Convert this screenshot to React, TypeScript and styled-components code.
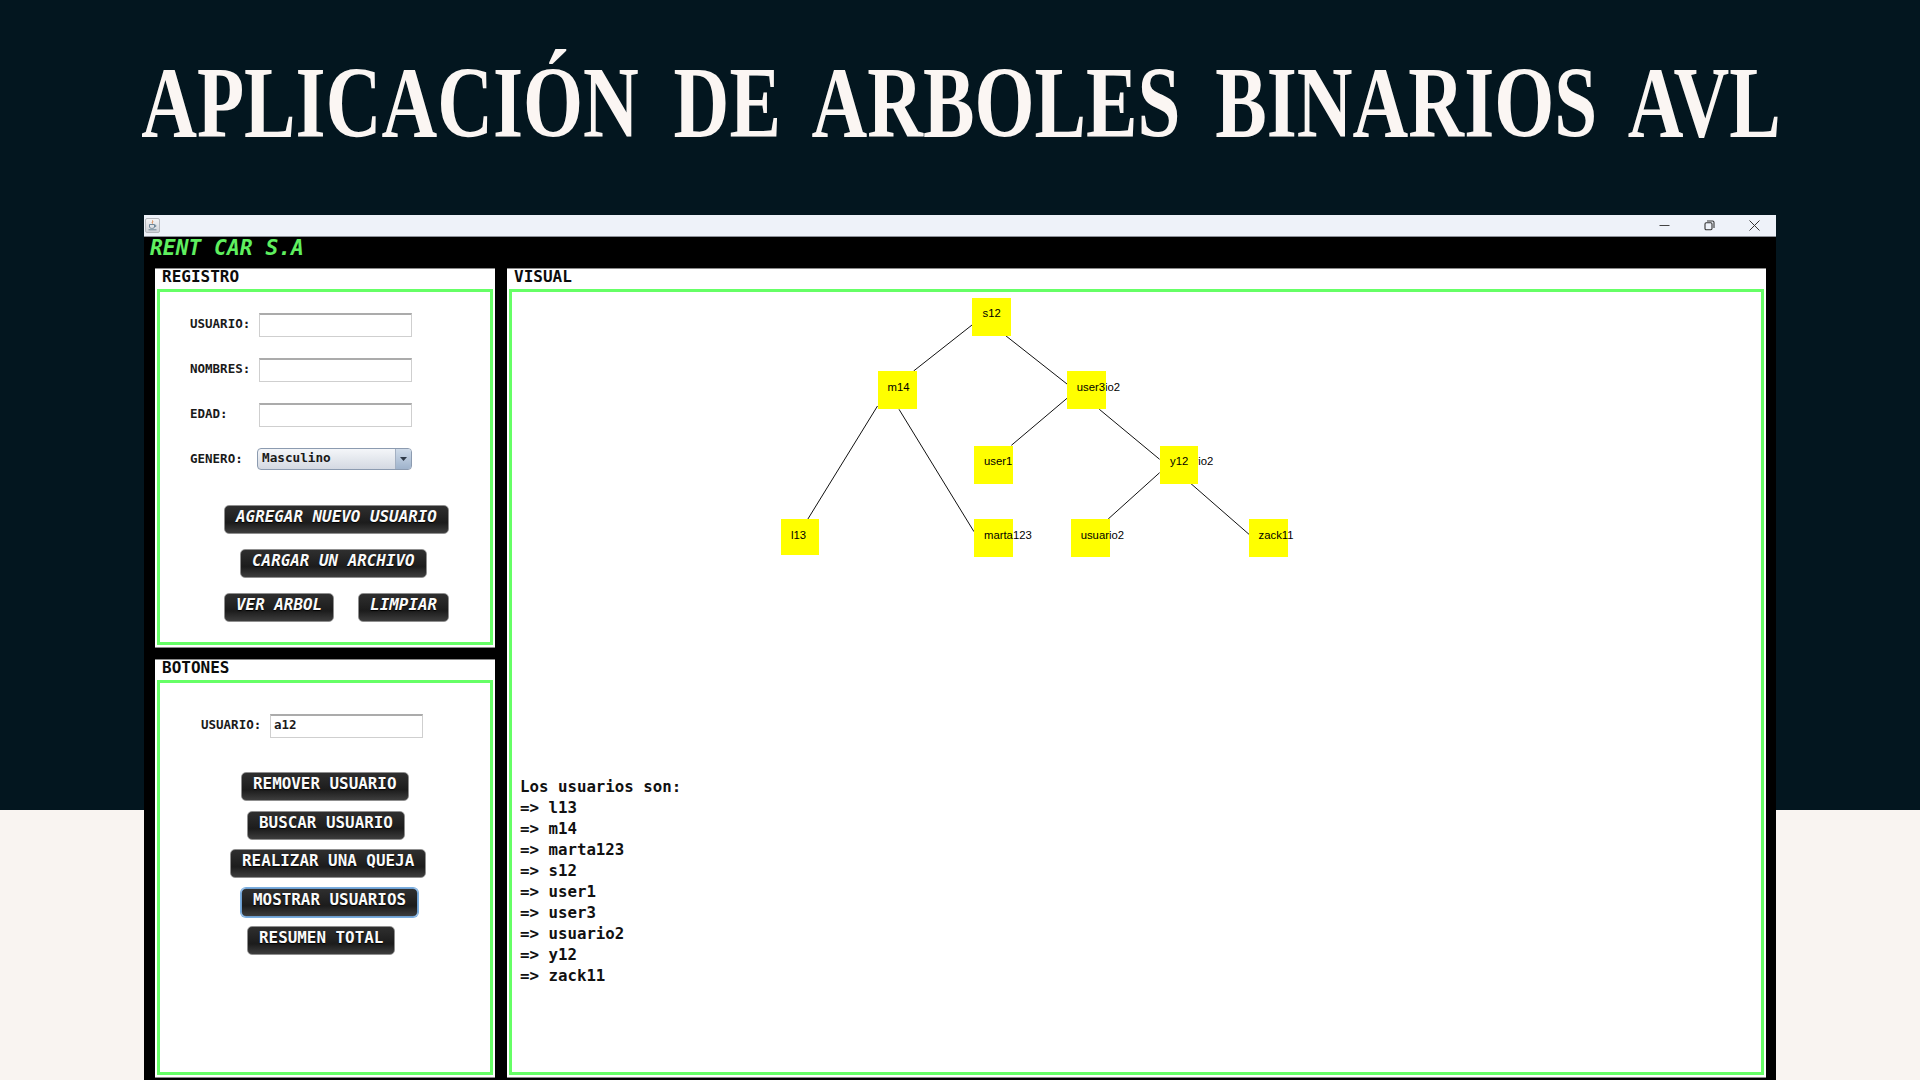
import React from "react";
import styled, { createGlobalStyle } from "styled-components";

const Global = createGlobalStyle`
  html, body { margin: 0; padding: 0; }
  body { background: #03161f; }
`;

const MONO = `"DejaVu Sans Mono", "Liberation Mono", monospace`;

const Page = styled.div`
  width: 1920px;
  height: 1080px;
  overflow: hidden;
  background: linear-gradient(#03161f 810px, #f9f4f1 810px);
  display: flex;
  flex-direction: column;
`;
const Hero = styled.header`
  height: 215px;
  flex: none;
  display: flex;
  justify-content: center;
  padding: 52px 0 0 2px;
  box-sizing: border-box;
`;
const Title = styled.h1`
  margin: 0;
  font-family: "Liberation Serif", serif;
  font-weight: 700;
  font-size: 102px;
  line-height: 102px;
  color: #fbf6f3;
  white-space: nowrap;
  word-spacing: 20.5px;
  transform: scaleX(0.757);
  transform-origin: center top;
`;
const Win = styled.section`
  flex: none;
  width: 1632px;
  height: 865px;
  margin-left: 144px;
  background: #000;
  display: flex;
  flex-direction: column;
`;
const TitleBar = styled.div`
  height: 21px;
  flex: none;
  background: #eef2f9;
  border-bottom: 1px solid #8d9199;
  display: flex;
  align-items: center;
  justify-content: space-between;
  padding: 0 16px 0 1px;
`;
const AppIcon = styled.div`
  width: 15px;
  height: 15px;
  box-sizing: border-box;
  border: 1px solid #b5b8bd;
  border-radius: 2px;
  background: linear-gradient(#f3f4f6, #cfd2d8);
  display: flex;
  align-items: center;
  justify-content: center;
`;
const Controls = styled.div`
  display: flex;
  align-items: center;
  gap: 34px;
`;
const Brand = styled.div`
  height: 31px;
  flex: none;
  padding-left: 6px;
  font: italic 700 21.3px/21px ${MONO};
  color: #5fef5f;
`;
const Columns = styled.div`
  display: flex;
  gap: 12px;
  padding: 0 10px 0 11px;
  flex: 1;
  min-height: 0;
`;
const LeftColumn = styled.div`
  width: 340px;
  flex: none;
  display: flex;
  flex-direction: column;
  gap: 11px;
  padding-bottom: 2px;
`;
const Panel = styled.div<{ $h?: number }>`
  background: #fff;
  box-sizing: border-box;
  border-top: 1px solid #8a8a8a;
  border-bottom: 1px solid #8a8a8a;
  padding: 0 2px 2px;
  display: flex;
  flex-direction: column;
  ${(p) => (p.$h ? `height: ${p.$h}px; flex: none;` : "flex: 1;")}
`;
const RightPanel = styled(Panel)`
  flex: 1;
  margin-bottom: 2px;
`;
const PanelTitle = styled.div`
  height: 20px;
  flex: none;
  padding-left: 5px;
  font: 700 16px/15px ${MONO};
  color: #0c0c0c;
`;
const Frame = styled.div<{ $top?: number }>`
  flex: 1;
  min-height: 0;
  border: 3px solid #66ff66;
  padding-top: ${(p) => p.$top ?? 0}px;
  display: flex;
  flex-direction: column;
  align-items: flex-start;
`;
const FormRow = styled.div<{ $indent: number }>`
  display: flex;
  align-items: center;
  height: 24px;
  margin-left: ${(p) => p.$indent}px;
  margin-bottom: 21px;
`;
const FieldLabel = styled.label`
  width: 69px;
  flex: none;
  font: 700 12.5px/16px ${MONO};
  color: #1a1a1a;
  padding-bottom: 3px;
`;
const TextField = styled.input`
  width: 153px;
  height: 24px;
  box-sizing: border-box;
  border: 1px solid #cfcfcf;
  border-top: 2px solid #ababab;
  background: #fff;
  padding: 0 3px 5px;
  font: 700 12.5px ${MONO};
  color: #1a1a1a;
  outline: none;
`;
const Combo = styled.div`
  width: 155px;
  height: 22px;
  margin-left: -2px;
  margin-top: -2px;
  box-sizing: border-box;
  border: 1px solid #8c9bb0;
  border-radius: 4px;
  background: linear-gradient(#f4f6f9, #d4d9e2);
  display: flex;
  align-items: stretch;
  justify-content: space-between;
  overflow: hidden;
  font: 700 12.7px/17px ${MONO};
  color: #1a1a1a;
  padding-left: 4px;
`;
const ComboArrow = styled.div`
  width: 15px;
  flex: none;
  background: linear-gradient(#cfdbe9, #9fb3cc);
  border-left: 1px solid #a3b0c2;
  display: flex;
  align-items: center;
  justify-content: center;
`;
const ButtonStack = styled.div<{ $gap: number; $top: number }>`
  display: flex;
  flex-direction: column;
  align-items: flex-start;
  gap: ${(p) => p.$gap}px;
  margin-top: ${(p) => p.$top}px;
`;
const ButtonRow = styled.div<{ $indent: number; $gap?: number }>`
  display: flex;
  margin-left: ${(p) => p.$indent}px;
  gap: ${(p) => p.$gap ?? 0}px;
`;
const DarkButton = styled.button<{ $italic?: boolean; $focus?: boolean }>`
  height: 29px;
  box-sizing: border-box;
  padding: 0 11px 6px;
  border: 1px solid #8f8f8f;
  border-radius: 5px;
  background: linear-gradient(#2f2f2f 0%, #1c1c1c 62%, #3d3d3d 100%);
  color: #fafafa;
  font: ${(p) => (p.$italic ? "italic" : "normal")} 700 15.9px/22px ${MONO};
  white-space: nowrap;
  text-shadow: 0 1px 1px #000;
  ${(p) => (p.$focus ? "border-color:#6f9fd0; box-shadow: 0 0 0 1px #7aaee0;" : "")}
`;
const Canvas = styled.div`
  position: relative;
  height: 484px;
  width: 100%;
  flex: none;
`;
const Edges = styled.svg`
  position: absolute;
  inset: 0;
  width: 100%;
  height: 100%;
`;
const Node = styled.div<{ $x: number; $y: number; $w: number; $h: number }>`
  position: absolute;
  left: ${(p) => p.$x}px;
  top: ${(p) => p.$y}px;
  width: ${(p) => p.$w}px;
  height: ${(p) => p.$h}px;
  background: #ffff00;
`;
const NodeLabel = styled.span<{ $x: number; $y: number }>`
  position: absolute;
  left: ${(p) => p.$x}px;
  top: ${(p) => p.$y}px;
  font: 11.3px/14px "Liberation Sans", Arial, sans-serif;
  color: #000;
  white-space: nowrap;
`;
const Results = styled.div`
  padding-left: 8px;
  font: 700 15.75px/21px ${MONO};
  color: #111;
  white-space: pre;
`;

const OX = 512;
const OY = 292;
const nodes = [
  { label: "s12", x: 972, y: 298, w: 39, h: 38, lx: 982.5, ly: 313 },
  { label: "m14", x: 877.5, y: 371, w: 39, h: 38, lx: 887.5, ly: 387 },
  { label: "user3", x: 1067, y: 371, w: 39, h: 38, lx: 1076.8, ly: 387, ghost: "usuario2" },
  { label: "user1", x: 974, y: 445.5, w: 38.5, h: 38, lx: 984, ly: 460.5 },
  { label: "y12", x: 1159.6, y: 445.5, w: 38.5, h: 38, lx: 1170, ly: 460.5, ghost: "usuario2" },
  { label: "l13", x: 780.7, y: 519, w: 38.5, h: 36, lx: 791, ly: 534.5 },
  { label: "marta123", x: 974, y: 519, w: 38.5, h: 38, lx: 984, ly: 534.5 },
  { label: "usuario2", x: 1071, y: 519, w: 38.5, h: 38, lx: 1080.7, ly: 534.5 },
  { label: "zack11", x: 1249, y: 519, w: 38.5, h: 38, lx: 1258.6, ly: 534.5 },
];
const edges = [
  [972, 325, 913.6, 371],
  [1005.7, 335.7, 1067, 384],
  [877.5, 406, 807.9, 519],
  [899, 409.3, 974, 531.7],
  [1067, 398.3, 1011.4, 445.3],
  [1099.3, 409.3, 1159.6, 459.3],
  [1159.6, 472.7, 1108.2, 519],
  [1191, 483.7, 1249, 534.3],
];
const users = ["l13", "m14", "marta123", "s12", "user1", "user3", "usuario2", "y12", "zack11"];

const JavaIcon = () => (
  <svg width="11" height="11" viewBox="0 0 11 11" fill="none">
    <path d="M5.5 .5c1 1.2-1 1.8 0 3" stroke="#d9722e" strokeWidth="1" />
    <path d="M2.5 4.5h5v2.5a2 2 0 0 1-2 1.4h-1a2 2 0 0 1-2-1.4z" stroke="#6f8798" strokeWidth="1" />
    <path d="M7.5 5.2h1.3v1.3H7.5M1.5 9.8h8" stroke="#6f8798" strokeWidth="1" />
  </svg>
);
const MinIcon = () => (
  <svg width="11" height="11" viewBox="0 0 11 11"><path d="M.5 5.5h10" stroke="#444" strokeWidth="1" /></svg>
);
const RestoreIcon = () => (
  <svg width="11" height="11" viewBox="0 0 11 11" fill="none" stroke="#333" strokeWidth="1.1">
    <rect x="1" y="2.8" width="7" height="7" rx="1.2" />
    <path d="M3 1h5.6a1.4 1.4 0 0 1 1.4 1.4V8" />
  </svg>
);
const CloseIcon = () => (
  <svg width="11" height="11" viewBox="0 0 11 11"><path d="M.5.5l10 10M10.5.5l-10 10" stroke="#333" strokeWidth="1" /></svg>
);

export default function App() {
  return (
    <Page>
      <Global />
      <Hero>
        <Title>APLICACIÓN DE ARBOLES BINARIOS AVL</Title>
      </Hero>
      <Win>
        <TitleBar>
          <AppIcon><JavaIcon /></AppIcon>
          <Controls>
            <MinIcon />
            <RestoreIcon />
            <CloseIcon />
          </Controls>
        </TitleBar>
        <Brand>RENT CAR S.A</Brand>
        <Columns>
          <LeftColumn>
            <Panel $h={380}>
              <PanelTitle>REGISTRO</PanelTitle>
              <Frame $top={21}>
                <FormRow $indent={30}><FieldLabel>USUARIO:</FieldLabel><TextField readOnly /></FormRow>
                <FormRow $indent={30}><FieldLabel>NOMBRES:</FieldLabel><TextField readOnly /></FormRow>
                <FormRow $indent={30}><FieldLabel>EDAD:</FieldLabel><TextField readOnly /></FormRow>
                <FormRow $indent={30}>
                  <FieldLabel>GENERO:</FieldLabel>
                  <Combo>
                    Masculino
                    <ComboArrow>
                      <svg width="7" height="4" viewBox="0 0 7 4"><path d="M0 0h7L3.5 4z" fill="#2f3a48" /></svg>
                    </ComboArrow>
                  </Combo>
                </FormRow>
                <ButtonStack $gap={15} $top={12}>
                  <ButtonRow $indent={64}><DarkButton $italic>AGREGAR NUEVO USUARIO</DarkButton></ButtonRow>
                  <ButtonRow $indent={80}><DarkButton $italic>CARGAR UN ARCHIVO</DarkButton></ButtonRow>
                  <ButtonRow $indent={64} $gap={24}>
                    <DarkButton $italic>VER ARBOL</DarkButton>
                    <DarkButton $italic>LIMPIAR</DarkButton>
                  </ButtonRow>
                </ButtonStack>
              </Frame>
            </Panel>
            <Panel>
              <PanelTitle>BOTONES</PanelTitle>
              <Frame $top={31}>
                <FormRow $indent={41}><FieldLabel>USUARIO:</FieldLabel><TextField readOnly value="a12" /></FormRow>
                <ButtonStack $gap={9.5} $top={13}>
                  <ButtonRow $indent={81}><DarkButton>REMOVER USUARIO</DarkButton></ButtonRow>
                  <ButtonRow $indent={87}><DarkButton>BUSCAR USUARIO</DarkButton></ButtonRow>
                  <ButtonRow $indent={70}><DarkButton>REALIZAR UNA QUEJA</DarkButton></ButtonRow>
                  <ButtonRow $indent={81}><DarkButton $focus>MOSTRAR USUARIOS</DarkButton></ButtonRow>
                  <ButtonRow $indent={87}><DarkButton>RESUMEN TOTAL</DarkButton></ButtonRow>
                </ButtonStack>
              </Frame>
            </Panel>
          </LeftColumn>
          <RightPanel>
            <PanelTitle>VISUAL</PanelTitle>
            <Frame>
              <Canvas>
                <Edges>
                  {edges.map(([a, b, c, d], i) => (
                    <line key={i} x1={a - OX} y1={b - OY} x2={c - OX} y2={d - OY} stroke="#111" strokeWidth="1" />
                  ))}
                </Edges>
                {nodes.filter((n) => n.ghost).map((n) => (
                  <NodeLabel key={n.label + "-ghost"} $x={n.lx - OX} $y={n.ly - OY - 7}>{n.ghost}</NodeLabel>
                ))}
                {nodes.map((n) => (
                  <Node key={n.label} $x={n.x - OX} $y={n.y - OY} $w={n.w} $h={n.h} />
                ))}
                {nodes.map((n) => (
                  <NodeLabel key={n.label} $x={n.lx - OX} $y={n.ly - OY - 7}>{n.label}</NodeLabel>
                ))}
              </Canvas>
              <Results>
                {"Los usuarios son:\n" + users.map((u) => "=> " + u).join("\n")}
              </Results>
            </Frame>
          </RightPanel>
        </Columns>
      </Win>
    </Page>
  );
}
